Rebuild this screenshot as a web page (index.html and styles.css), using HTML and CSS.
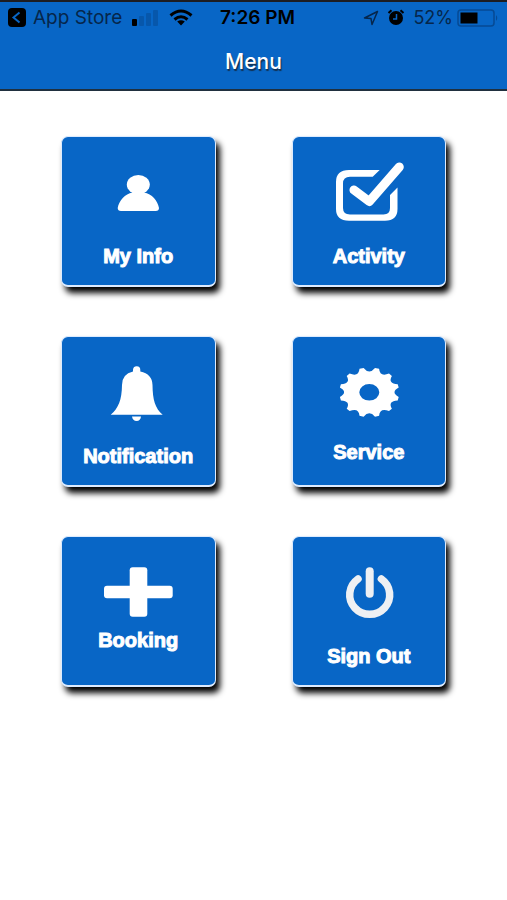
FILE: index.html
```html
<!DOCTYPE html>
<html lang="en">
<head>
<meta charset="utf-8">
<meta name="viewport" content="width=device-width, initial-scale=1">
<title>Menu</title>
<link rel="stylesheet" href="styles.css">
</head>
<body>
<header class="header">
  <div class="status">
    <div class="status-left">
      <a class="back" href="#">
        <svg width="18" height="19" viewBox="0 0 18 19" aria-hidden="true"><rect width="18" height="19" rx="4" fill="#000"/><path d="M11.500 4.500 5.500 9.500l6 5" fill="none" stroke="#0866c6" stroke-width="2"/></svg>
        <span>App Store</span>
      </a>
      <svg width="27" height="17" viewBox="0 0 27 17" aria-hidden="true"><rect y="10" width="5" height="7" rx="1" fill="#000"/><g fill="#0757ab"><rect x="7" y="7" width="5" height="10" rx="1"/><rect x="14" y="4" width="5" height="13" rx="1"/><rect x="21" y="1" width="5" height="16" rx="1"/></g></svg>
      <svg width="24" height="17" viewBox="0 0 24 17" aria-hidden="true"><g fill="none" stroke="#000" stroke-width="3"><path d="M1.500 6.500Q12-2.500 22.500 6.500"/><path d="M5.500 10.500Q12 5 18.500 10.500"/></g><path d="M8.200 12.500Q12 9.800 15.800 12.500L12 16.500Z"/></svg>
    </div>
    <time class="clock">7:26 PM</time>
    <div class="status-right">
      <svg width="16" height="16" viewBox="0 0 16 16" aria-hidden="true"><path d="M14.500 1.500 1.500 8 8 8.500 9 14.500Z" fill="none" stroke="#06264b" stroke-width="1.500" stroke-linejoin="round"/></svg>
      <svg width="18" height="17" viewBox="0 0 18 17" aria-hidden="true"><circle cx="9" cy="9" r="7"/><path d="M1.500 4 4.500 1.200M16.500 4 13.500 1.200" stroke="#000" stroke-width="2"/><path d="M9.500 5v5H6" fill="none" stroke="#0866c6" stroke-width="1.500"/></svg>
      <span class="charge">52%</span>
      <svg width="42" height="18" viewBox="0 0 42 18" aria-hidden="true"><rect x="1" y="1" width="36" height="16" rx="3" fill="none" stroke="#064a94" stroke-width="1.500"/><rect x="3.500" y="3.500" width="17" height="11"/><path d="M39 6q2.500 3 0 6Z" fill="#064a94"/></svg>
    </div>
  </div>
  <h1 class="title">Menu</h1>
</header>
<main class="menu">
  <button class="tile" type="button">
    <svg class="icon" viewBox="0 0 80 83" aria-hidden="true"><ellipse cx="40.300" cy="23.600" rx="11.500" ry="9.700"/><path d="M32 28H49L46 31.500C54 33 59.700 39.500 61 47Q61 50 57.700 50H23Q19.700 50 19.700 47C21 39.500 27 33 34.500 31.500Z"/></svg>
    <span>My Info</span>
  </button>
  <button class="tile" type="button">
    <svg class="icon" viewBox="0 0 80 83" aria-hidden="true"><path d="M50.700 9H20Q7 9 7 21V48Q7 59.700 20 59.700H56Q68.500 59.700 68.500 48V26.500L61 34V47Q61 53.500 54.500 53.500H21Q14 53.500 14 47V22.500Q14 15.700 21 15.700H43.700Z"/><path d="M25 29 40.300 40.500 70.300 6" fill="none" stroke="#fff" stroke-width="9" stroke-linecap="round" stroke-linejoin="round"/></svg>
    <span>Activity</span>
  </button>
  <button class="tile" type="button">
    <svg class="icon" viewBox="0 0 80 83" aria-hidden="true"><path d="M35 10.500V9Q35 5.200 38.700 5.200T42.300 9V10.500Q54.300 13 54.500 24C54.700 39 57 47 64.700 53.800H12.700C20.500 47 23.800 39 24 24Q24 13 35 10.500ZM34 55.600H43Q42.500 60 38.600 60T34 55.600Z"/></svg>
    <span>Notification</span>
  </button>
  <button class="tile" type="button">
    <svg class="icon icon-medium" viewBox="0 0 80 79" aria-hidden="true"><g transform="translate(40.300 31.300) scale(1 .83)"><path fill-rule="evenodd" d="M29.400 5.700 28.400 9.800Q18.200 10.500 22.600 19.700L19.700 22.600Q10.500 18.200 9.800 28.400L5.700 29.400Q0 21-5.700 29.400L-9.800 28.400Q-10.500 18.200-19.700 22.600L-22.600 19.700Q-18.200 10.500-28.400 9.800L-29.400 5.700Q-21 0-29.400-5.700L-28.400-9.800Q-18.200-10.500-22.600-19.700L-19.700-22.600Q-10.500-18.200-9.800-28.400L-5.700-29.400Q0-21 5.700-29.400L9.800-28.400Q10.500-18.200 19.700-22.600L22.600-19.700Q18.200-10.500 28.400-9.800L29.400-5.700Q21 0 29.400 5.700ZM-10 0a10 10 0 1 0 20 0a10 10 0 1 0-20 0Z"/></g></svg>
    <span>Service</span>
  </button>
  <button class="tile" type="button">
    <svg class="icon icon-short" viewBox="0 0 80 67" aria-hidden="true"><rect x="31.700" y="6.300" width="17.600" height="49.400" rx="3"/><rect x="6" y="24.700" width="68.700" height="12.600" rx="3"/></svg>
    <span>Booking</span>
  </button>
  <button class="tile" type="button">
    <svg class="icon" viewBox="0 0 80 83" aria-hidden="true"><g fill="none" stroke="#eef0f3" stroke-linecap="round"><path d="M29 18A20 19.500 0 1 0 52.400 18" stroke-width="7.500"/><path d="M40.700 10.300V32.700" stroke-width="8"/></g></svg>
    <span>Sign Out</span>
  </button>
</main>
</body>
</html>
```
FILE: styles.css
```css
* {
  box-sizing: border-box;
}

body {
  margin: 0;
  background: #fff;
  font-family: "Liberation Sans", Arial, sans-serif;
}

.header {
  background: #0866c6;
  border-top: 2px solid #1d1d22;
  border-bottom: 2px solid #20303f;
  color: #000;
  font-family: Inter, "Liberation Sans", sans-serif;
}

.status {
  display: grid;
  grid-template-columns: 1fr auto 1fr;
  align-items: center;
  height: 31px;
  padding-left: 8px;
  font-size: 19px;
  line-height: 24px;
}

.status-left,
.status-right,
.back {
  display: flex;
  align-items: center;
}

.status-left {
  gap: 10px;
}

.back {
  gap: 7px;
  color: #06264b;
  text-decoration: none;
  white-space: nowrap;
}

.clock {
  font-weight: 600;
}

.status-right {
  justify-content: flex-end;
  gap: 8px;
  padding-right: 8px;
}

.charge {
  color: #06264b;
  font-size: 18px;
  margin-right: -4px;
}

.title {
  margin: 0;
  padding: 15px 0 13px;
  color: #fff;
  font-size: 21px;
  font-weight: 500;
  line-height: 28px;
  text-align: center;
  text-shadow: 1px 2px 1px #12304f;
}

.menu {
  display: grid;
  grid-template-columns: 1fr 1fr;
  column-gap: 76px;
  row-gap: 49px;
  padding: 45px 12%;
}

.tile {
  display: flex;
  flex-direction: column;
  align-items: center;
  min-height: 151px;
  padding: 24px 0 0;
  border: 1px solid #dcebff;
  border-bottom-width: 2px;
  border-radius: 7px;
  background: #0866c6;
  box-shadow: 4px 6px 6px #000;
  color: #fff;
  font-family: inherit;
  font-size: 20px;
  font-weight: 700;
  line-height: 24px;
  -webkit-text-stroke: 1px #fff;
}

.icon {
  width: 80px;
  height: 83px;
  fill: #fff;
}

.icon-medium {
  height: 79px;
}

.icon-short {
  height: 67px;
}
```
